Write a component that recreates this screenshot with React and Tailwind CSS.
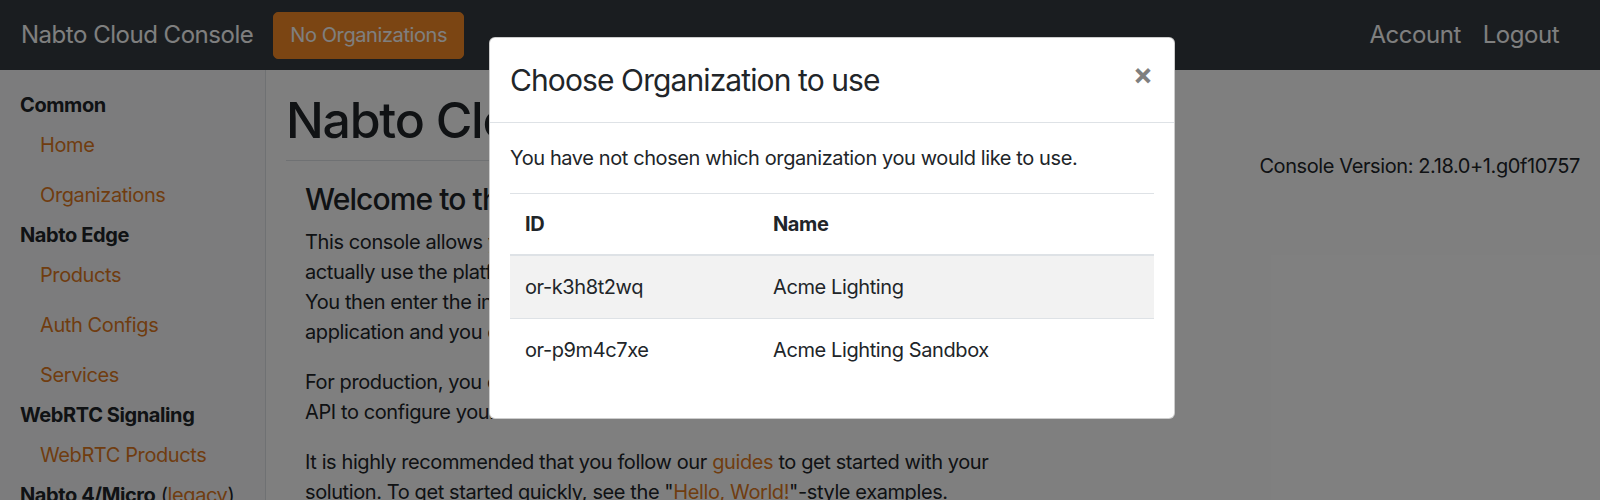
import React from "react";

const linkCls = "block px-5 py-[10px] text-[#e07a1f] leading-[30px]";
const headCls = "font-bold leading-[30px] text-[#212529]";

function Sidebar() {
  return (
    <aside className="h-[430px] w-[266px] shrink-0 border-r border-[#dee2e6] bg-[#f8f9fa] px-5 pt-5">
      <div className={headCls}>Common</div>
      <a className={linkCls}>Home</a>
      <a className={linkCls}>Organizations</a>
      <div className={headCls}>Nabto Edge</div>
      <a className={linkCls}>Products</a>
      <a className={linkCls}>Auth Configs</a>
      <a className={linkCls}>Services</a>
      <div className={headCls}>WebRTC Signaling</div>
      <a className={linkCls}>WebRTC Products</a>
      <div className="leading-[30px] text-[#212529]">
        <span className="font-bold">Nabto 4/Micro</span> (<a className="text-[#e07a1f]">legacy</a>)
      </div>
    </aside>
  );
}

function Main() {
  return (
    <main className="flex flex-1 px-5 pt-5">
      <div className="w-[720px] shrink-0">
        <h1 className="mb-5 border-b border-[#dee2e6] pb-[10px] text-[50px] font-medium leading-[60px] tracking-[-0.025em]">
          Nabto Cloud Console
        </h1>
        <div className="pl-[19px]">
          <h4 className="mb-[10px] text-[30px] font-medium leading-[36px] tracking-[-0.03em]">
            Welcome to the Nabto Cloud Console
          </h4>
          <p className="mb-5 whitespace-nowrap">
            This console allows you to configure the Nabto services needed to
            <br />
            actually use the platform: products, apps, devices and access rules.
            <br />
            You then enter the information from the console in your device and
            <br />
            application and you can start connecting clients to your devices.
          </p>
          <p className="mb-5 whitespace-nowrap">
            For production, you can automate this setup using the Nabto Cloud
            <br />
            API to configure your account and devices.
          </p>
          <p className="mb-5 whitespace-nowrap">
            It is highly recommended that you follow our <a className="text-[#e07a1f]">guides</a> to get started with your
            <br />
            solution. To get started quickly, see the "<a className="text-[#e07a1f]">Hello, World!</a>"-style examples.
          </p>
        </div>
      </div>
      <div className="flex-1 pt-[61px] text-right">Console Version: 2.18.0+1.g0f10757</div>
    </main>
  );
}

function Modal() {
  return (
    <div className="absolute left-[489px] top-[37px] w-[686px] rounded-[6px] border border-black/20 bg-white text-[#212529]">
      <div className="flex items-start justify-between border-b border-[#dee2e6] p-5">
        <h5 className="text-[30px] font-normal leading-[44px] tracking-[-0.03em]">Choose Organization to use</h5>
        <button className="-mt-[4px] mr-[1px] text-[30px] font-bold leading-[40px] tracking-normal text-black/50">×</button>
      </div>
      <div className="p-5">
        <p className="mb-5">You have not chosen which organization you would like to use.</p>
        <table className="mb-[17px] w-full border-collapse">
          <thead>
            <tr>
              <th className="w-[248px] border-b-2 border-t border-[#dee2e6] p-[15px] text-left font-bold leading-[30px]">ID</th>
              <th className="border-b-2 border-t border-[#dee2e6] p-[15px] text-left font-bold leading-[30px]">Name</th>
            </tr>
          </thead>
          <tbody>
            <tr className="bg-[#f2f2f2]">
              <td className="border-t border-[#dee2e6] px-[15px] py-[16px] leading-[30px]">or-k3h8t2wq</td>
              <td className="border-t border-[#dee2e6] px-[15px] py-[16px] leading-[30px]">Acme Lighting</td>
            </tr>
            <tr>
              <td className="border-t border-[#dee2e6] px-[15px] py-[16px] leading-[30px]">or-p9m4c7xe</td>
              <td className="border-t border-[#dee2e6] px-[15px] py-[16px] leading-[30px]">Acme Lighting Sandbox</td>
            </tr>
          </tbody>
        </table>
      </div>
    </div>
  );
}

export default function App() {
  return (
    <div className="relative h-[500px] w-[1600px] overflow-hidden bg-white font-['Inter',sans-serif] text-[20px] leading-[1.5] tracking-[-0.02em] text-[#212529]">
      <nav className="flex h-[70px] items-center bg-[#343a40] pl-[21px] pr-[41px]">
        <span className="text-[24px] tracking-[-0.02em] text-white">Nabto Cloud Console</span>
        <button className="ml-5 h-[47px] rounded-[5px] border border-[#f68a26] bg-[#f68a26] px-[16px] text-[20px] text-white">
          No Organizations
        </button>
        <div className="ml-auto flex gap-[22px] text-[24px] tracking-[-0.02em] text-white">
          <a>Account</a>
          <a>Logout</a>
        </div>
      </nav>
      <div className="flex">
        <Sidebar />
        <Main />
      </div>
      <div className="absolute inset-0 bg-black/50" />
      <Modal />
    </div>
  );
}
